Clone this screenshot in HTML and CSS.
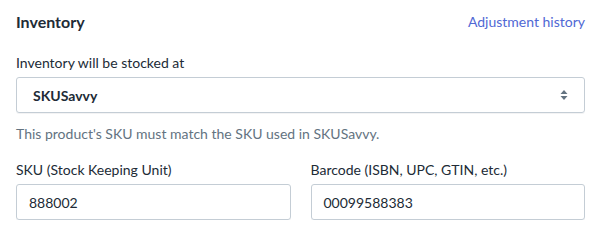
FILE: index.html
```html
<!DOCTYPE html>
<html>
<head>
<meta charset="utf-8">
<link rel="stylesheet" href="styles.css">
</head>
<body>
<div class="card">
  <div class="card-header">
    <h2 class="card-title">Inventory</h2>
    <a class="link" href="#">Adjustment history</a>
  </div>
  <div class="field">
    <label class="label">Inventory will be stocked at</label>
    <div class="select">
      <span class="select-value">SKUSavvy</span>
      <svg class="select-arrow" width="8" height="12" viewBox="0 0 8 12"><path d="M4 1L7.5 5H0.5z" fill="#637381"/><path d="M4 11L0.5 7H7.5z" fill="#637381"/></svg>
    </div>
    <p class="help">This product's SKU must match the SKU used in SKUSavvy.</p>
  </div>
  <div class="row">
    <div class="field col">
      <label class="label">SKU (Stock Keeping Unit)</label>
      <div class="input">888002</div>
    </div>
    <div class="field col">
      <label class="label">Barcode (ISBN, UPC, GTIN, etc.)</label>
      <div class="input">00099588383</div>
    </div>
  </div>
</div>
</body>
</html>
```

FILE: styles.css
```css
html, body {
  margin: 0;
  padding: 0;
  background: #ffffff;
}
body {
  font-family: "Lato", "Noto Sans", sans-serif;
  font-size: 14px;
  color: #212b36;
}
.card {
  padding: 10px 15px 0 16px;
}
.card-header {
  display: flex;
  justify-content: space-between;
  align-items: center;
  height: 22px;
}
.card-title {
  margin: 0;
  font-size: 16px;
  font-weight: 700;
  color: #212b36;
}
.link {
  color: #5068d4;
  text-decoration: none;
  font-size: 14px;
}
.field {
  display: flex;
  flex-direction: column;
}
.label {
  margin-top: 21px;
  line-height: 20px;
  margin-bottom: 4px;
}
.select {
  height: 34px;
  border: 1px solid #c4cdd5;
  border-radius: 3px;
  display: flex;
  align-items: center;
  justify-content: space-between;
  padding: 0 16px 0 16px;
  box-shadow: 0 1px 0 rgba(22,29,37,0.05);
}
.select-value {
  font-weight: 700;
}
.help {
  margin: 11px 0 0 0;
  color: #637381;
  line-height: 20px;
}
.row {
  display: flex;
  gap: 20px;
}
.col {
  flex: 1;
}
.row .label {
  margin-top: 16px;
  margin-bottom: 4px;
}
.input {
  height: 34px;
  border: 1px solid #c4cdd5;
  border-radius: 3px;
  display: flex;
  align-items: center;
  padding: 0 12px;
  box-shadow: 0 1px 0 rgba(22,29,37,0.05);
}
```
